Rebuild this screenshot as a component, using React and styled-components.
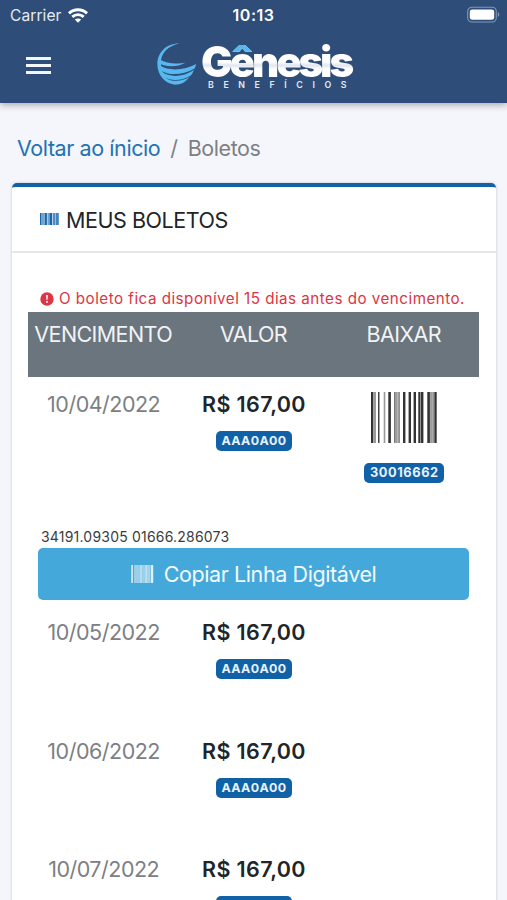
import { useState } from 'react'
import styled, { createGlobalStyle } from 'styled-components'

const boletos = [
    { id: 1, vencimento: '10/04/2022', valor: 'R$ 167,00', placa: 'AAA0A00', numero: '30016662', linha: '34191.09305 01666.286073' },
    { id: 2, vencimento: '10/05/2022', valor: 'R$ 167,00', placa: 'AAA0A00' },
    { id: 3, vencimento: '10/06/2022', valor: 'R$ 167,00', placa: 'AAA0A00' },
    { id: 4, vencimento: '10/07/2022', valor: 'R$ 167,00', placa: 'AAA0A00' },
]

// [x, width, color]
const bars = [
    [0, 2.3, '#333'], [2.3, 2.7, '#999'], [7, 1.5, '#444'], [12.7, 1.6, '#999'],
    [17.3, 2.6, '#333'], [23, 1.7, '#777'], [25.2, 1.4, '#888'], [27.3, 1.5, '#777'],
    [32, 2.4, '#333'], [37.6, 2.4, '#333'], [42.6, 2.4, '#333'], [47.3, 2.2, '#333'],
    [50, 2.4, '#333'], [56.3, 2.6, '#333'], [59.2, 1.6, '#888'], [61.3, 1.6, '#888'], [63.3, 2.4, '#333'],
]

function WifiIcon() {
    return (
        <svg width="20" height="15" viewBox="0 0 20 15" fill="none" stroke="#fff" strokeWidth="2.9">
            <path d="M1 5.4 C6 0.6 14 0.6 19 5.4" />
            <path d="M4.3 8.9 C7.5 5.9 12.5 5.9 15.7 8.9" />
            <path d="M10 14.8 L6.8 11.6 C8.6 10 11.4 10 13.2 11.6 Z" fill="#fff" stroke="none" />
        </svg>
    )
}

function BatteryIcon() {
    return (
        <svg width="34" height="17" viewBox="0 0 34 17">
            <rect x="1.7" y="0.2" width="28.6" height="14.8" rx="4.2" fill="none" stroke="#8197b6" strokeWidth="1.1" />
            <rect x="3.8" y="2.4" width="24.4" height="10.4" rx="2.4" fill="#fff" />
            <path d="M31.8 5.3 C33.8 6 33.8 9.2 31.8 9.9 Z" fill="#8197b6" />
        </svg>
    )
}

function Globe() {
    return (
        <svg width="41" height="44" viewBox="0 2 41 44" fill="#56b8ee">
            <path d="M23.5 4.6 C10 4.2 1.4 14 1.4 25 C1.4 37 10 45.5 20.5 45.5 C12 43 4.9 35 4.9 24 C4.9 14 12 7 23.5 4.6 Z" />
            <path d="M3.6 20.6 C11 25 22 25.4 29.5 23.4 C22 28 11 28.6 3.6 24.6 Z" />
            <path d="M4 26.6 C13 32.4 29 31.4 40.2 25 C39.8 27 39.2 28.2 38.6 29.4 C27 36 13 37 5 31.4 Z" />
            <path d="M5.6 32.6 C14 39 27 38.2 38 31 C37.2 33.2 36 35.2 34.6 36.8 C26 41.8 15 42.6 8 38 Z" />
            <path d="M9 39 C17 43.2 26 42.6 33.4 38 C30 43 25 45.6 20.4 45.6 C16 45.6 12 43.2 9 39 Z" />
        </svg>
    )
}

function BarcodeIcon() {
    return (
        <svg width="66" height="51" viewBox="0 0 66 51" preserveAspectRatio="none">
            {bars.map(([x, w, color]) => (
                <rect key={x} x={x} y="0" width={w} height="51" fill={color} />
            ))}
        </svg>
    )
}

function TitleBarcode() {
    return (
        <svg width="19" height="12" viewBox="0 0 19 12" fill="#1767ac">
            <rect x="0" width="1.4" height="12" />
            <rect x="1.4" width="3" height="12" opacity="0.6" />
            <rect x="4.6" width="2.3" height="12" />
            <rect x="7.4" width="1.8" height="12" opacity="0.6" />
            <rect x="9.4" width="2.6" height="12" />
            <rect x="12.6" width="3" height="12" opacity="0.75" />
            <rect x="16" width="2.8" height="12" opacity="0.8" />
        </svg>
    )
}

function ButtonBarcode() {
    return (
        <svg width="23" height="18" viewBox="0 0 23 18" fill="#fff">
            <rect x="0.3" width="1.6" height="18" opacity="0.8" />
            <rect x="3" width="5.8" height="18" opacity="0.45" />
            <rect x="8.8" width="2.2" height="18" opacity="0.6" />
            <rect x="11" width="3.2" height="18" opacity="0.45" />
            <rect x="14.2" width="2" height="18" opacity="0.65" />
            <rect x="16.2" width="3.4" height="18" opacity="0.5" />
            <rect x="20" width="2.2" height="18" opacity="0.85" />
        </svg>
    )
}

function AlertIcon() {
    return (
        <svg width="14" height="14" viewBox="0 0 14 14">
            <circle cx="7" cy="7" r="6.7" fill="#dc3545" />
            <path d="M6 3 H8 L7.7 7.8 H6.3 Z" fill="#fbe3e5" />
            <circle cx="7" cy="9.9" r="1.1" fill="#fbe3e5" />
        </svg>
    )
}

function BoletoRow({ boleto }) {
    const [copied, setCopied] = useState(false)

    const copyLine = () => {
        if (navigator.clipboard) navigator.clipboard.writeText(boleto.linha)
        setCopied(true)
    }

    return (
        <>
            <Row $tall={Boolean(boleto.linha)}>
                <Cell><DueDate>{boleto.vencimento}</DueDate></Cell>
                <Cell>
                    <Price>{boleto.valor}</Price>
                    <Badge>{boleto.placa}</Badge>
                </Cell>
                <Cell>
                    {boleto.numero &&
                        <Download type="button">
                            <BarcodeIcon />
                            <Badge $wide>{boleto.numero}</Badge>
                        </Download>
                    }
                </Cell>
            </Row>
            {boleto.linha &&
                <LineBlock>
                    <LineCode>{boleto.linha}</LineCode>
                    <CopyButton type="button" onClick={copyLine} aria-pressed={copied}>
                        <ButtonBarcode />
                        <span>Copiar Linha Digitável</span>
                    </CopyButton>
                </LineBlock>
            }
        </>
    )
}

function App() {
    return (
        <Screen>
            <GlobalStyle />
            <Header>
                <StatusBar>
                    <Carrier><span>Carrier</span><WifiIcon /></Carrier>
                    <Clock>10:13</Clock>
                    <Battery><BatteryIcon /></Battery>
                </StatusBar>
                <NavBar>
                    <MenuButton type="button" aria-label="Menu"><i /><i /><i /></MenuButton>
                    <Brand>
                        <Globe />
                        <div>
                            <BrandName>Gênesis</BrandName>
                            <BrandTag>BENEFÍCIOS</BrandTag>
                        </div>
                    </Brand>
                </NavBar>
            </Header>
            <Breadcrumb>
                <a href="#inicio">Voltar ao ínicio</a>
                <Separator>/</Separator>
                <span>Boletos</span>
            </Breadcrumb>
            <Card>
                <CardHeader>
                    <TitleBarcode />
                    <CardTitle>MEUS BOLETOS</CardTitle>
                </CardHeader>
                <CardBody>
                    <Notice><AlertIcon /><span>O boleto fica disponível 15 dias antes do vencimento.</span></Notice>
                    <TableHead>
                        <Heading>VENCIMENTO</Heading>
                        <Heading>VALOR</Heading>
                        <Heading>BAIXAR</Heading>
                    </TableHead>
                    {boletos.map((boleto) => <BoletoRow key={boleto.id} boleto={boleto} />)}
                </CardBody>
            </Card>
        </Screen>
    )
}

export default App

const GlobalStyle = createGlobalStyle`
    * {
        box-sizing: border-box;
    }

    body {
        margin: 0;
        background: #f4f6fb;
        font-family: Inter, 'Liberation Sans', sans-serif;
        color: #212529;
    }

    button {
        font-family: inherit;
        border: 0;
        padding: 0;
        background: none;
        cursor: pointer;
    }

    svg {
        display: block;
        flex-shrink: 0;
        overflow: visible;
    }
`

const Screen = styled.div`
    height: 900px;
    overflow: hidden;
    display: flex;
    flex-direction: column;
`

const Header = styled.header`
    flex-shrink: 0;
    height: 103px;
    background: #2e4e79;
    box-shadow: 0 2px 7px rgba(0, 0, 0, 0.32);
`

const StatusBar = styled.div`
    height: 30px;
    padding: 0 7px 0 10px;
    display: grid;
    grid-template-columns: 1fr auto 1fr;
    align-items: center;
    color: #fff;
    font-size: 15.5px;
`

const Carrier = styled.div`
    display: flex;
    align-items: center;
    gap: 6px;
    color: #e6ebf2;
    letter-spacing: 0.1px;
`

const Clock = styled.div`
    margin-right: 3px;
    font-size: 16px;
    font-weight: 600;
    letter-spacing: 0.5px;
`

const Battery = styled.div`
    display: flex;
    justify-content: flex-end;
`

const NavBar = styled.nav`
    height: 73px;
    padding: 9px 0 0 26px;
    display: flex;
    align-items: flex-start;
    gap: 105px;
`

const MenuButton = styled.button`
    width: 25px;
    margin-top: 18px;
    display: flex;
    flex-direction: column;
    gap: 4px;

    i {
        width: 25px;
        height: 3px;
        background: #f3f6fa;
    }
`

const Brand = styled.div`
    padding-top: 2px;
    display: flex;
    gap: 4px;
`

const BrandName = styled.div`
    width: 154px;
    height: 39px;
    font-size: 42px;
    font-weight: 900;
    line-height: 42px;
    letter-spacing: -3.1px;
    color: transparent;
    /* the accent over the "ê" takes the light blue */
    background-image:
        linear-gradient(#56b8ee, #56b8ee),
        linear-gradient(#fff 54%, #e0e6ee 62%, #fff 72%);
    background-size: 21px 11px, 100% 100%;
    background-position: 29px 0, 0 0;
    background-repeat: no-repeat;
    -webkit-background-clip: text;
    background-clip: text;
`

const BrandTag = styled.div`
    margin-left: 7px;
    font-size: 8.8px;
    font-weight: 600;
    line-height: 10px;
    letter-spacing: 9.6px;
    white-space: nowrap;
    color: #e4eaf3;
`

const Breadcrumb = styled.div`
    flex-shrink: 0;
    height: 80px;
    padding: 31px 0 0 17px;
    display: flex;
    font-size: 21.5px;
    line-height: 28px;
    letter-spacing: -0.42px;
    color: #7d8083;

    a {
        color: #2272b4;
        text-decoration: none;
    }
`

const Separator = styled.span`
    margin: 0 10px;
`

const Card = styled.main`
    flex: 1 0 auto;
    margin: 0 11px 0 12px;
    background: #fff;
    border-top: 4px solid #1161a7;
    border-radius: 5px 5px 0 0;
    box-shadow: 0 0 3px rgba(0, 0, 0, 0.22);
`

const CardHeader = styled.div`
    height: 66px;
    padding: 0 28px;
    display: flex;
    align-items: center;
    gap: 7px;
    border-bottom: 2px solid #e6e7e8;
`

const CardTitle = styled.h1`
    margin: 0;
    padding-top: 1px;
    font-size: 21.5px;
    font-weight: 400;
    letter-spacing: -0.45px;
`

const CardBody = styled.div`
    padding: 33px 17px 0 16px;
`

const Notice = styled.div`
    height: 26px;
    padding: 0 0 1px 12px;
    display: flex;
    align-items: center;
    gap: 5px;
    color: #dc3545;
    font-size: 15.2px;
    letter-spacing: 0.48px;
    white-space: nowrap;
`

const TableHead = styled.div`
    height: 65px;
    padding-top: 8px;
    display: grid;
    grid-template-columns: repeat(3, 1fr);
    background: #6b757d;
`

const Heading = styled.div`
    text-align: center;
    color: #f1f3f5;
    font-size: 21.5px;
    line-height: 28px;
    letter-spacing: -0.6px;
`

const Row = styled.div`
    height: ${({ $tall }) => ($tall ? '150px' : '118.5px')};
    padding-top: ${({ $tall }) => ($tall ? '13px' : '18px')};
    display: grid;
    grid-template-columns: repeat(3, 1fr);
`

const Cell = styled.div`
    display: flex;
    flex-direction: column;
    align-items: center;
`

const DueDate = styled.span`
    padding-left: 1px;
    color: #7c8084;
    font-size: 21.5px;
    line-height: 28px;
    letter-spacing: -0.5px;
`

const Price = styled.strong`
    margin-bottom: 13px;
    padding-left: 1px;
    font-size: 21.5px;
    font-weight: 600;
    line-height: 28px;
    letter-spacing: 0.35px;
`

const Badge = styled.span`
    width: ${({ $wide }) => ($wide ? '80px' : '76px')};
    height: 20px;
    margin-left: 1px;
    border-radius: 5px;
    background: #1161a7;
    color: #e9f2fa;
    text-align: center;
    font-size: ${({ $wide }) => ($wide ? '12.8px' : '12.4px')};
    font-weight: 700;
    line-height: 19px;
    letter-spacing: ${({ $wide }) => ($wide ? '0.6px' : '0.35px')};
`

const Download = styled.button`
    margin-top: 2px;
    display: flex;
    flex-direction: column;
    align-items: center;
    gap: 20px;
`

const LineBlock = styled.div`
    padding: 0 10px;
`

const LineCode = styled.div`
    height: 21px;
    padding-left: 3px;
    font-size: 14px;
    line-height: 20px;
    letter-spacing: 0.2px;
    color: #3a3d40;
`

const CopyButton = styled.button`
    width: 100%;
    height: 52px;
    display: flex;
    align-items: center;
    justify-content: center;
    gap: 10px;
    border-radius: 5px;
    background: #45a8da;
    color: #f2fafe;
    font-size: 21.5px;
    letter-spacing: -0.4px;
`
